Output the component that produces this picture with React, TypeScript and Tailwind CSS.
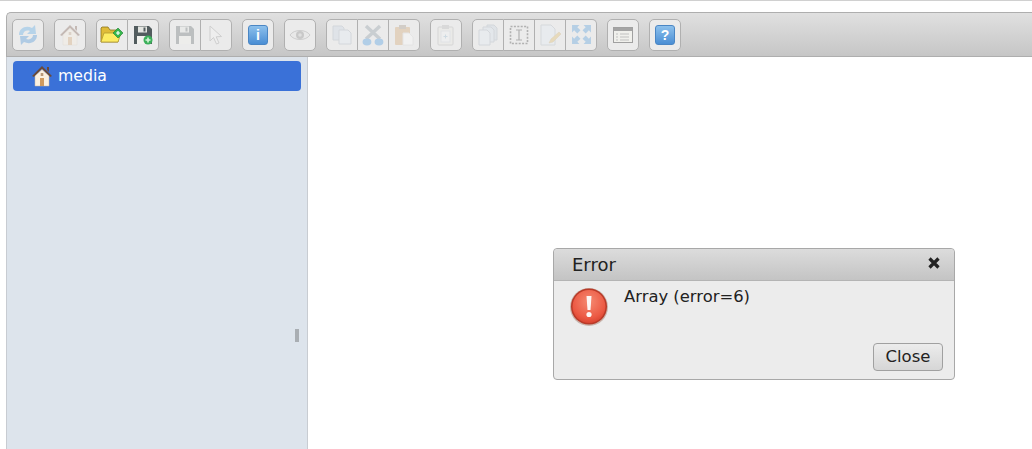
import type { ReactNode } from "react";

const Folder = () => (
  <svg width="24" height="21" viewBox="0 0 24 21">
    <path d="M1 4 L1 18 L18 18 L18 6 L10 6 L8 3 L2 3 Z" fill="#e0bc38" stroke="#8a7420" strokeWidth="0.8" />
    <path d="M1 18 L4 9 L21 9 L18 18 Z" fill="#fdec62" stroke="#b49c30" strokeWidth="0.8" />
    <path d="M18 4 L23 9 L18 14 L13 9 Z" fill="#35b84c" stroke="#1c7a30" strokeWidth="0.6" />
    <path d="M16 9 H20 M18 7 V11" stroke="#fff" strokeWidth="1.2" />
  </svg>
);

const SaveIcon = ({ plus }: { plus?: boolean }) => (
  <svg width="20" height="20" viewBox="0 0 20 20">
    <path d="M1 1 H16 L19 4 V19 H1 Z" fill="#525c5e" />
    <rect x="5" y="1.5" width="9" height="6" fill="#e4e6e2" />
    <rect x="10.5" y="2.5" width="2" height="4" fill="#525c5e" />
    <rect x="4" y="11" width="12" height="8" fill="#f2f2ee" />
    {plus && (
      <>
        <circle cx="15" cy="15" r="4.5" fill="#3bb05a" />
        <path d="M12.5 15 H17.5 M15 12.5 V17.5" stroke="#d8f5d8" strokeWidth="1.6" />
      </>
    )}
  </svg>
);

const HomeIcon = ({ size = 22 }: { size?: number }) => (
  <svg width={size} height={size} viewBox="0 0 22 22">
    <path d="M11 1 L21 11 L19 12 L11 4 L3 12 L1 11 Z" fill="#6b4a38" />
    <path d="M16 2 H18 V7 L16 5 Z" fill="#6b4a38" />
    <path d="M4 11 L11 4.5 L18 11 V21 H4 Z" fill="#fbf0e0" stroke="#c9b8a4" strokeWidth="0.5" />
    <rect x="9" y="13" width="4" height="8" fill="#cf9a5f" />
    <rect x="9.7" y="8" width="2.6" height="3" fill="#b89878" />
  </svg>
);

const Reload = () => (
  <svg width="22" height="22" viewBox="0 0 22 22">
    <path d="M2 11 C2 4 9 1 15 4 L18 1 L19 10 L10 10 L13 7 C9 5.5 6 8 6 11 Z" fill="#3f9ee6" />
    <path d="M20 11 C20 18 13 21 7 18 L4 21 L3 12 L12 12 L9 15 C13 16.5 16 14 16 11 Z" fill="#2a84d6" />
  </svg>
);

const Info = ({ q }: { q?: boolean }) => (
  <div className="flex h-[20px] w-[20px] items-center justify-center rounded-[3px] border border-[#4a86c4] bg-gradient-to-b from-[#8cc0ec] to-[#4a8ed4] font-['Liberation_Sans',sans-serif] text-[14px] font-bold leading-none text-white">
    {q ? "?" : "i"}
  </div>
);

const Eye = () => (
  <svg width="22" height="14" viewBox="0 0 22 14">
    <path d="M1 7 C5 1 17 1 21 7 C17 13 5 13 1 7 Z" fill="#e4e4e4" stroke="#8a8a8a" />
    <circle cx="11" cy="7" r="4" fill="#7a7a7a" />
    <circle cx="11" cy="7" r="1.8" fill="#c4c4c4" />
  </svg>
);

const Pointer = () => (
  <svg width="14" height="20" viewBox="0 0 14 20">
    <path d="M1 1 V16 L4.5 12.5 L7.5 19 L10 18 L7.2 11.8 L12.5 11.5 Z" fill="#f6f6f6" stroke="#8f8f8f" />
  </svg>
);

const CopyIcon = () => (
  <svg width="20" height="20" viewBox="0 0 20 20">
    <path d="M1 1 H10 L12 3 V15 H1 Z" fill="#c4d4e4" stroke="#a0acb8" />
    <path d="M7 5 H16 L19 8 V19 H7 Z" fill="#e4eef8" stroke="#a0acb8" />
  </svg>
);

const Cut = () => (
  <svg width="22" height="22" viewBox="0 0 22 22">
    <path d="M4 2 L18 15 M18 2 L4 15" stroke="#7e8c98" strokeWidth="3.4" />
    <ellipse cx="5" cy="18" rx="4.4" ry="3.4" fill="#2f8ce0" />
    <ellipse cx="17" cy="18" rx="4.4" ry="3.4" fill="#2f8ce0" />
  </svg>
);

const Paste = () => (
  <svg width="20" height="22" viewBox="0 0 20 22">
    <rect x="1" y="3" width="15" height="18" rx="1" fill="#d09a5c" />
    <rect x="5" y="1" width="7" height="4" fill="#9a8a78" />
    <path d="M9 9 H15 L19 13 V21 H9 Z" fill="#ffffff" stroke="#d8d8d8" />
  </svg>
);

const Duplicate = () => (
  <svg width="20" height="22" viewBox="0 0 20 22">
    <rect x="2" y="3" width="15" height="18" rx="1" fill="#e8e8e4" stroke="#a8a8a8" />
    <rect x="6" y="1" width="7" height="4" fill="#b0b0b0" />
    <rect x="5" y="7" width="9" height="11" fill="#f4f8fb" stroke="#c8d0d8" />
    <path d="M7.5 12.5 H11.5 M9.5 10.5 V14.5" stroke="#8eb4d0" />
  </svg>
);

const Stack = () => (
  <svg width="22" height="22" viewBox="0 0 22 22">
    <path d="M10 1 H17 L20 4 V16 H10 Z" fill="#c4d2e0" stroke="#a0acb8" />
    <path d="M6 3 H14 L17 6 V18 H6 Z" fill="#d4e0ec" stroke="#a0acb8" />
    <path d="M2 6 H10 L13 9 V21 H2 Z" fill="#e4eef8" stroke="#a0acb8" />
  </svg>
);

const Rename = () => (
  <svg width="20" height="20" viewBox="0 0 20 20">
    <rect x="1.5" y="1.5" width="17" height="17" fill="none" stroke="#2e2e2e" strokeWidth="1.6" strokeDasharray="2 1.4" />
    <path d="M7 5 H13 M7 15 H13 M10 5 V15" stroke="#2e2e2e" strokeWidth="1.2" />
  </svg>
);

const Edit = () => (
  <svg width="22" height="22" viewBox="0 0 22 22">
    <path d="M2 1 H12 L16 5 V21 H2 Z" fill="#e4eef8" stroke="#a8b2bc" />
    <path d="M10 19 L12 15 L20 8 L22 10 L14 18 Z" fill="#e0b450" stroke="#b8964c" strokeWidth="0.5" />
  </svg>
);

const Resize = () => (
  <svg width="21" height="21" viewBox="0 0 20 20" fill="#3a90d8">
    <path d="M1 1 H8 L6 3 L9 6 L6 9 L3 6 L1 8 Z" />
    <path d="M19 1 H12 L14 3 L11 6 L14 9 L17 6 L19 8 Z" />
    <path d="M1 19 H8 L6 17 L9 14 L6 11 L3 14 L1 12 Z" />
    <path d="M19 19 H12 L14 17 L11 14 L14 11 L17 14 L19 12 Z" />
  </svg>
);

const Panel = () => (
  <svg width="20" height="16" viewBox="0 0 20 16">
    <rect x="0.5" y="0.5" width="19" height="15" fill="#f0f0ec" stroke="#a0a0a0" />
    <rect x="1" y="1" width="18" height="3" fill="#a4a4a4" />
    <path d="M3 7 H5 M7 7 H16 M3 10 H5 M7 10 H16 M3 13 H5 M7 13 H16" stroke="#c0c0c0" />
  </svg>
);

const ToolBtn = ({ icon, off, pos = "only" }: { icon: ReactNode; off?: boolean; pos?: "only" | "first" | "mid" | "last" }) => {
  const shape = {
    only: "rounded-[5px] border",
    first: "rounded-l-[5px] border",
    mid: "border border-l-0",
    last: "rounded-r-[5px] border border-l-0",
  }[pos];
  return (
    <div className={`flex h-[32px] items-center justify-center border-[#b0b0b0] bg-[#ebebeb] ${pos === "only" || pos === "first" ? "w-[32px]" : "w-[31px]"} ${shape}`}>
      <div className={`flex items-center justify-center ${off ? "opacity-30" : ""}`}>{icon}</div>
    </div>
  );
};

const Group = ({ items }: { items: { icon: ReactNode; off?: boolean }[] }) => (
  <div className="flex">
    {items.map((it, i) => (
      <ToolBtn
        key={i}
        icon={it.icon}
        off={it.off}
        pos={items.length === 1 ? "only" : i === 0 ? "first" : i === items.length - 1 ? "last" : "mid"}
      />
    ))}
  </div>
);

export default function App() {
  return (
    <div className="relative h-[449px] w-[1032px] overflow-hidden bg-white font-['DejaVu_Sans',sans-serif]">
      <div className="h-px bg-[#d0d0d0]" />
      <div className="pl-[6px] pt-[11px]">
        <div className="flex h-[45px] items-center gap-[10px] rounded-tl-[5px] border-y border-l border-[#aeaeae] bg-gradient-to-b from-[#e0e0e0] to-[#c6c6c6] pl-[5px]">
          <Group items={[{ icon: <Reload />, off: true }]} />
          <Group items={[{ icon: <HomeIcon />, off: true }]} />
          <Group items={[{ icon: <Folder /> }, { icon: <SaveIcon plus /> }]} />
          <Group items={[{ icon: <SaveIcon />, off: true }, { icon: <Pointer />, off: true }]} />
          <Group items={[{ icon: <Info /> }]} />
          <Group items={[{ icon: <Eye />, off: true }]} />
          <Group items={[{ icon: <CopyIcon />, off: true }, { icon: <Cut />, off: true }, { icon: <Paste />, off: true }]} />
          <Group items={[{ icon: <Duplicate />, off: true }]} />
          <Group items={[{ icon: <Stack />, off: true }, { icon: <Rename />, off: true }, { icon: <Edit />, off: true }, { icon: <Resize />, off: true }]} />
          <Group items={[{ icon: <Panel /> }]} />
          <Group items={[{ icon: <Info q /> }]} />
        </div>
        <div className="flex h-[392px]">
          <div className="relative w-[302px] border-x border-[#c8ccd2] bg-[#dde4ec] px-[6px] pt-[4px]">
            <div className="flex h-[30px] items-center rounded-[4px] bg-[#3a71d8] pl-[18px] text-[15.7px] text-white">
              <HomeIcon size={22} />
              <span className="ml-[5px]">media</span>
            </div>
            <div className="absolute left-[288px] top-[272px] h-[13px] w-[4px] bg-[#a9aeb3]" />
          </div>
          <div className="flex-1 bg-white" />
        </div>
      </div>

      <div className="absolute left-[553px] top-[248px] flex h-[132px] w-[402px] flex-col rounded-[4px] border border-[#a8a8a8] bg-[#ececec] text-[#222]">
        <div className="flex h-[32px] items-center justify-between rounded-t-[4px] border-b border-[#b4b4b4] bg-gradient-to-b from-[#dcdcdc] to-[#c4c4c4] pl-[18px] pr-[13px] text-[18px]">
          <span>Error</span>
          <svg width="14" height="14" viewBox="0 0 14 14" className="-mt-[3px]">
            <path d="M2.5 2.5 L11.5 11.5 M11.5 2.5 L2.5 11.5" stroke="#222" strokeWidth="3.2" />
          </svg>
        </div>
        <div className="flex flex-1 pl-[15px] pt-[6px]">
          <svg width="40" height="40" viewBox="0 0 40 40" className="shrink-0">
            <defs>
              <radialGradient id="err" cx="50%" cy="35%" r="70%">
                <stop offset="0%" stopColor="#f58a72" />
                <stop offset="70%" stopColor="#ec5a44" />
                <stop offset="100%" stopColor="#d63f2c" />
              </radialGradient>
            </defs>
            <circle cx="20" cy="20" r="19" fill="#c9b4ac" />
            <circle cx="20" cy="19.5" r="18" fill="#b93a28" />
            <circle cx="20" cy="19.5" r="16.5" fill="url(#err)" />
            <path d="M17.5 9 H22.5 L21.5 23 H18.5 Z" fill="#fdf6f4" />
            <circle cx="20" cy="27.5" r="2.6" fill="#fdf6f4" />
          </svg>
          <span className="ml-[15px] text-[16.4px] leading-[20px]">Array (error=6)</span>
        </div>
        <div className="flex justify-end pb-[8px] pr-[11px]">
          <div className="flex h-[28px] w-[70px] items-center justify-center rounded-[4px] border border-[#a0a0a0] bg-gradient-to-b from-[#ececec] to-[#d6d6d6] text-[16.5px]">
            Close
          </div>
        </div>
      </div>
    </div>
  );
}
